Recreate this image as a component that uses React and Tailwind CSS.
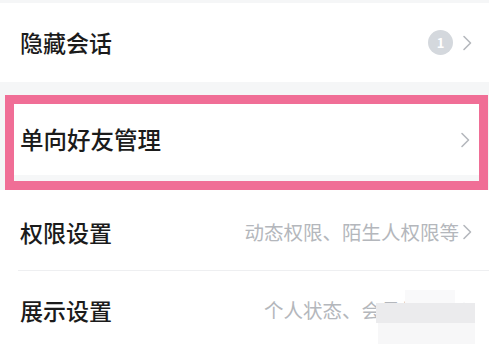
const font = { fontFamily: '"Noto Sans CJK SC", "Noto Sans", sans-serif' };

function Chevron() {
  return (
    <svg width="10" height="16" viewBox="0 0 10 16" className="shrink-0">
      <path d="M2 1.5 L8.5 8 L2 14.5" fill="none" stroke="#b5b8bd" strokeWidth="1.6" strokeLinecap="round" strokeLinejoin="round" />
    </svg>
  );
}

export default function App() {
  return (
    <div className="relative h-[344px] w-[489px] overflow-hidden bg-[#f5f6f7] pt-[3px]" style={font}>
      <div className="flex h-[79px] items-center justify-between bg-white pl-5 pr-[17px]">
        <span className="text-[23px] font-medium text-[#1b1b1b]">隐藏会话</span>
        <div className="flex items-center gap-[9px]">
          <span className="flex h-[25px] w-[25px] items-center justify-center rounded-full bg-[#d4d8dd] text-[13px] font-bold text-white">1</span>
          <Chevron />
        </div>
      </div>

      <div className="mt-[13px] ml-[5px] h-[95px] w-[483px] border-[9px] border-[#f06e96] bg-[#f6f7f8]">
        <div className="flex h-[71px] items-center justify-between bg-white pl-[6px] pr-[9px]">
          <span className="text-[23.5px] font-medium text-[#1b1b1b]">单向好友管理</span>
          <Chevron />
        </div>
      </div>

      <div className="bg-white">
        <div className="flex h-[80px] items-center justify-between pl-5 pr-[17px] pt-[4px]">
          <span className="text-[23px] font-medium text-[#1b1b1b]">权限设置</span>
          <div className="flex items-center gap-[3px]">
            <span className="text-[19.5px] text-[#b4b7bc]">动态权限、陌生人权限等</span>
            <Chevron />
          </div>
        </div>
        <div className="ml-[18px] h-px bg-[#eeeff1]" />
        <div className="flex h-[78px] items-center justify-between pl-5 pr-[17px]">
          <span className="text-[23px] font-medium text-[#1b1b1b]">展示设置</span>
          <div className="flex items-center gap-[3px]">
            <span className="text-[19.5px] text-[#b4b7bc]">个人状态、会员标识等</span>
            <Chevron />
          </div>
        </div>
      </div>

      <div className="absolute left-[376px] top-[303px] h-[20px] w-[99px] bg-[#ebebed]" />
      <div className="absolute left-[378px] top-[323px] h-[21px] w-[97px] bg-[#f7f7f8]" />
      <div className="absolute left-[405px] top-[290px] h-[13px] w-[50px] bg-[#f9f9fa]" />
    </div>
  );
}
